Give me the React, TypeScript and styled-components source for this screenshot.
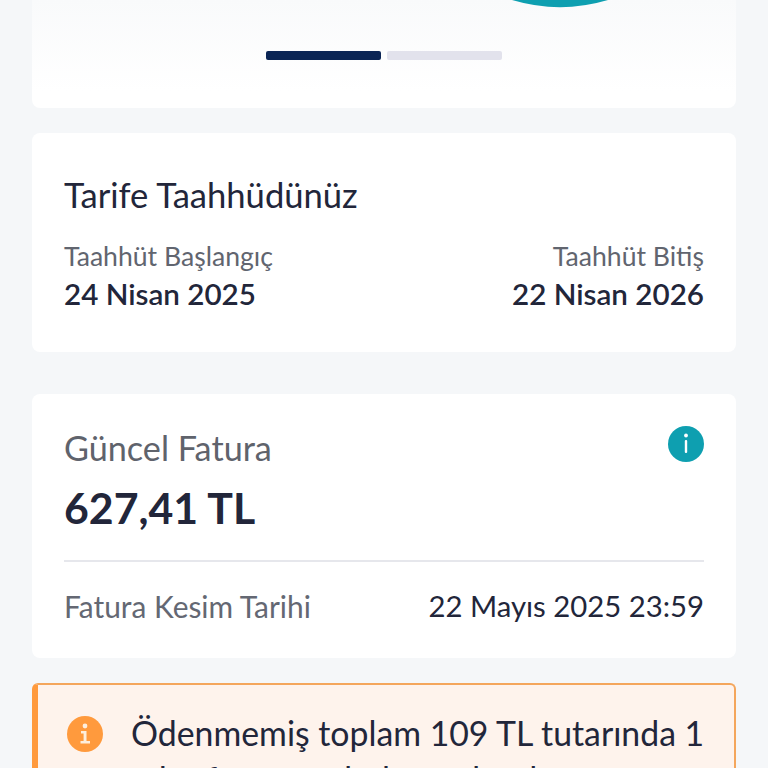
import React from "react";
import styled, { createGlobalStyle } from "styled-components";

const Global = createGlobalStyle`
  html, body { margin: 0; padding: 0; background: #f5f7f9; }
  #root { font-family: "Lato", "Noto Sans", sans-serif; }
`;

const Page = styled.div`
  width: 768px;
  height: 768px;
  overflow: hidden;
  box-sizing: border-box;
  padding: 0 32px;
  background: #f5f7f9;
  display: flex;
  flex-direction: column;
`;

const Card = styled.section<{ $gap: number }>`
  flex: none;
  background: #fff;
  border-radius: 8px;
  margin-bottom: ${(p) => p.$gap}px;
  box-sizing: border-box;
`;

const HeroCard = styled(Card)`
  height: 108px;
  border-radius: 0 0 8px 8px;
  background: linear-gradient(#f9fafb, #ffffff 85%);
  display: flex;
  flex-direction: column;
  align-items: center;
`;

const Arc = styled.svg`
  display: block;
  flex: none;
`;

const Steps = styled.div`
  display: flex;
  gap: 6px;
  margin-top: 43px;
`;

const Step = styled.span<{ $active?: boolean }>`
  width: 115px;
  height: 9px;
  border-radius: 2px;
  background: ${(p) => (p.$active ? "#0b2555" : "#e2e2ec")};
`;

const TermCard = styled(Card)`
  height: 219px;
  padding: 40px 32px 0;
`;

const Title = styled.h2`
  margin: 0;
  font-size: 34.6px;
  line-height: 44px;
  font-weight: 400;
  color: #22263a;
`;

const TermRow = styled.div`
  display: flex;
  justify-content: space-between;
  margin-top: 22px;
`;

const TermCol = styled.div<{ $end?: boolean }>`
  display: flex;
  flex-direction: column;
  gap: 3px;
  align-items: ${(p) => (p.$end ? "flex-end" : "flex-start")};
`;

const Label = styled.span`
  font-size: 26.6px;
  line-height: 34px;
  color: #61656f;
`;

const DateValue = styled.span`
  font-size: 29.6px;
  line-height: 36px;
  font-weight: 600;
  color: #22263a;
`;

const BillCard = styled(Card)`
  height: 264px;
  padding: 32px 32px 0;
`;

const BillHead = styled.div`
  display: flex;
  justify-content: space-between;
  align-items: flex-start;
`;

const BillTitle = styled.h2`
  margin: 0;
  font-size: 34.2px;
  line-height: 44px;
  font-weight: 400;
  color: #5f636c;
`;

const Amount = styled.div`
  margin-top: 11px;
  font-size: 42.8px;
  line-height: 54px;
  font-weight: 700;
  color: #22263a;
`;

const Divider = styled.hr`
  margin: 25px 0 0;
  border: 0;
  height: 2px;
  background: #e6e7ec;
`;

const CutRow = styled.div`
  display: flex;
  justify-content: space-between;
  align-items: center;
  margin-top: 24px;
`;

const CutLabel = styled.span`
  font-size: 29.9px;
  line-height: 40px;
  color: #646873;
`;

const CutValue = styled.span`
  font-size: 29.3px;
  line-height: 40px;
  color: #22263a;
`;

const Alert = styled.section`
  flex: none;
  display: flex;
  gap: 28px;
  box-sizing: border-box;
  height: 200px;
  padding: 25px 26px 0 29px;
  background: #fef3ec;
  border: 2px solid #f4a65c;
  border-left: 6px solid #ff9a3d;
  border-bottom: 0;
  border-radius: 6px;
`;

const AlertIcon = styled.svg`
  flex: none;
  margin-top: 6px;
`;

const AlertText = styled.p`
  margin: 0;
  font-size: 33.8px;
  line-height: 46px;
  color: #22263a;
`;

export default function App() {
  return (
    <>
      <Global />
      <Page>
        <HeroCard $gap={25}>
          <Arc width="704" height="8" viewBox="0 0 704 8">
            <path d="M480 0 A168 168 0 0 0 576 0 Z" fill="#0e9fb0" />
          </Arc>
          <Steps>
            <Step $active />
            <Step />
          </Steps>
        </HeroCard>

        <TermCard $gap={42}>
          <Title>Tarife Taahhüdünüz</Title>
          <TermRow>
            <TermCol>
              <Label>Taahhüt Başlangıç</Label>
              <DateValue>24 Nisan 2025</DateValue>
            </TermCol>
            <TermCol $end>
              <Label>Taahhüt Bitiş</Label>
              <DateValue>22 Nisan 2026</DateValue>
            </TermCol>
          </TermRow>
        </TermCard>

        <BillCard $gap={25}>
          <BillHead>
            <BillTitle>Güncel Fatura</BillTitle>
            <svg width="36" height="36" viewBox="0 0 36 36" role="img" aria-label="bilgi">
              <circle cx="18" cy="18" r="18" fill="#0e9fb0" />
              <circle cx="18" cy="9.5" r="1.9" fill="#fff" />
              <rect x="16.8" y="14" width="2.4" height="13" rx="1" fill="#fff" />
            </svg>
          </BillHead>
          <Amount>627,41 TL</Amount>
          <Divider />
          <CutRow>
            <CutLabel>Fatura Kesim Tarihi</CutLabel>
            <CutValue>22 Mayıs 2025 23:59</CutValue>
          </CutRow>
        </BillCard>

        <Alert>
          <AlertIcon width="36" height="36" viewBox="0 0 36 36" role="img" aria-label="uyarı">
            <circle cx="18" cy="18" r="18" fill="#ff9a3d" />
            <circle cx="18" cy="10" r="2.4" fill="#fdeedd" />
            <path d="M14 15h5.5v10H23v2.6H13.5V25H16.6v-7.4H14z" fill="#fdeedd" />
          </AlertIcon>
          <AlertText>Ödenmemiş toplam 109 TL tutarında 1 adet faturanız bulunmaktadır.</AlertText>
        </Alert>
      </Page>
    </>
  );
}
